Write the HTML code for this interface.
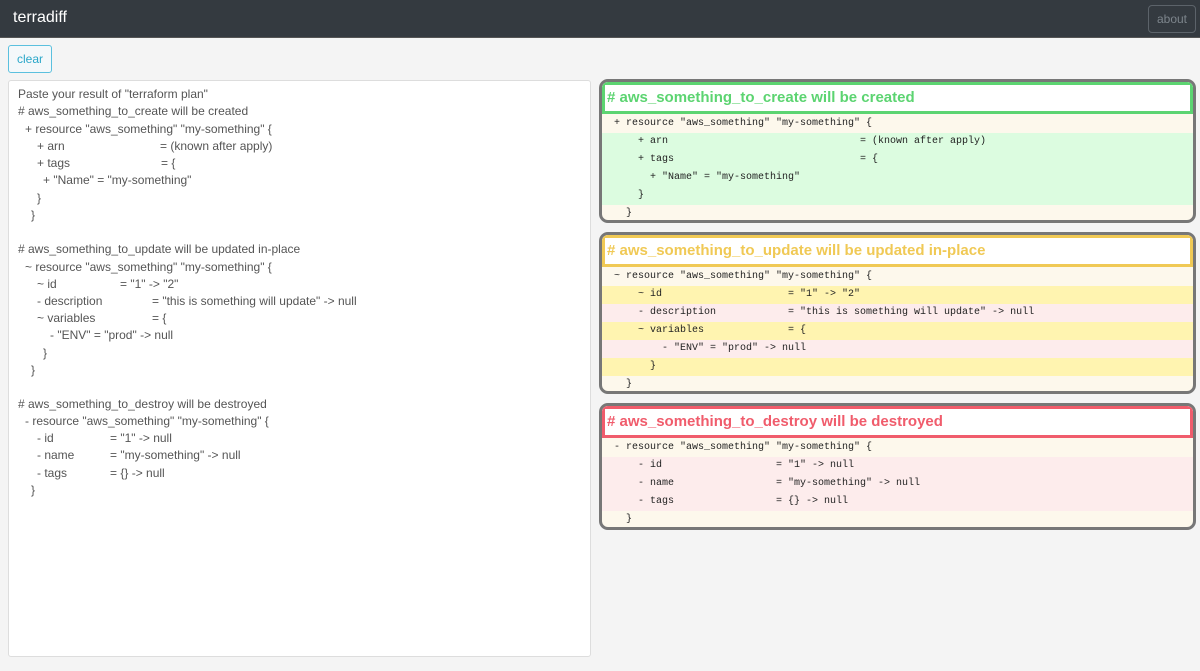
<!DOCTYPE html>
<html><head><meta charset="utf-8"><style>
*{box-sizing:border-box;margin:0;padding:0}
body{width:1200px;height:671px;background:#f4f4f4;font-family:"Liberation Sans",sans-serif;position:relative;overflow:hidden}
.nav{position:absolute;left:0;top:0;width:1200px;height:38px;background:#343a40;border-bottom:1px solid #555}
.brand{position:absolute;left:13px;top:9px;color:#fff;font-size:16px}
.about{position:absolute;left:1148px;top:5px;width:48px;height:28px;border:1px solid #5c636a;border-radius:4px;color:#7d858c;font-size:12px;text-align:center;line-height:26px}
.clear{position:absolute;left:8px;top:45px;width:44px;height:28px;border:1px solid #5bc0de;border-radius:3px;color:#2aa7c9;font-size:12px;text-align:center;line-height:26px;background:#f4f8fa}
.ta{position:absolute;left:8px;top:80px;width:583px;height:577px;background:#fff;border:1px solid #ddd;border-radius:3px}
.ta div{position:absolute;font-size:12px;color:#555;white-space:pre;line-height:14px}
.panel{position:absolute;left:599px;width:597px;border:3px solid #777;border-radius:9px;overflow:hidden;background:#fdf8ec}
.hd{height:32px;border:3px solid;background:#fff;font-weight:bold;font-size:15px;padding-left:2px;line-height:25px;margin-bottom:1px}
.r{height:18px;font-family:"Liberation Mono",monospace;font-size:10px;line-height:18px;white-space:pre;padding-left:12px;color:#222}
.g{background:#dcfce0}.y{background:#fff4b0}.p{background:#fdecec}
</style></head><body>
<div class="nav"><div class="brand">terradiff</div><div class="about">about</div></div>
<div class="clear">clear</div>
<div class="ta">
<div style="left:9px;top:6px">Paste your result of "terraform plan"</div>
<div style="left:9px;top:23px"># aws_something_to_create will be created</div>
<div style="left:16px;top:41px">+ resource "aws_something" "my-something" {</div>
<div style="left:28px;top:58px">+ arn</div><div style="left:151px;top:58px">= (known after apply)</div>
<div style="left:28px;top:75px">+ tags</div><div style="left:152px;top:75px">= {</div>
<div style="left:34px;top:92px">+ "Name" = "my-something"</div>
<div style="left:28px;top:110px">}</div>
<div style="left:22px;top:127px">}</div>
<div style="left:9px;top:161px"># aws_something_to_update will be updated in-place</div>
<div style="left:16px;top:179px">~ resource "aws_something" "my-something" {</div>
<div style="left:28px;top:196px">~ id</div><div style="left:111px;top:196px">= "1" -&gt; "2"</div>
<div style="left:28px;top:213px">- description</div><div style="left:143px;top:213px">= "this is something will update" -&gt; null</div>
<div style="left:28px;top:230px">~ variables</div><div style="left:143px;top:230px">= {</div>
<div style="left:41px;top:247px">- "ENV" = "prod" -&gt; null</div>
<div style="left:34px;top:265px">}</div>
<div style="left:22px;top:282px">}</div>
<div style="left:9px;top:316px"># aws_something_to_destroy will be destroyed</div>
<div style="left:16px;top:333px">- resource "aws_something" "my-something" {</div>
<div style="left:28px;top:350px">- id</div><div style="left:101px;top:350px">= "1" -&gt; null</div>
<div style="left:28px;top:367px">- name</div><div style="left:101px;top:367px">= "my-something" -&gt; null</div>
<div style="left:28px;top:385px">- tags</div><div style="left:101px;top:385px">= {} -&gt; null</div>
<div style="left:22px;top:402px">}</div>
</div>

<div class="panel" style="top:79px;height:144px">
<div class="hd" style="border-color:#5cd471;color:#5cd471"># aws_something_to_create will be created</div>
<div class="r">+ resource "aws_something" "my-something" {</div>
<div class="r g">    + arn                                = (known after apply)</div>
<div class="r g">    + tags                               = {</div>
<div class="r g">      + "Name" = "my-something"</div>
<div class="r g">    }</div>
<div class="r">  }</div>
</div>

<div class="panel" style="top:232px;height:162px">
<div class="hd" style="border-color:#f0c955;color:#f0c955"># aws_something_to_update will be updated in-place</div>
<div class="r">~ resource "aws_something" "my-something" {</div>
<div class="r y">    ~ id                     = "1" -&gt; "2"</div>
<div class="r p">    - description            = "this is something will update" -&gt; null</div>
<div class="r y">    ~ variables              = {</div>
<div class="r p">        - "ENV" = "prod" -&gt; null</div>
<div class="r y">      }</div>
<div class="r">  }</div>
</div>

<div class="panel" style="top:403px;height:127px">
<div class="hd" style="border-color:#f05c6c;color:#f05c6c"># aws_something_to_destroy will be destroyed</div>
<div class="r">- resource "aws_something" "my-something" {</div>
<div class="r p">    - id                   = "1" -&gt; null</div>
<div class="r p">    - name                 = "my-something" -&gt; null</div>
<div class="r p">    - tags                 = {} -&gt; null</div>
<div class="r">  }</div>
</div>
</body></html>
